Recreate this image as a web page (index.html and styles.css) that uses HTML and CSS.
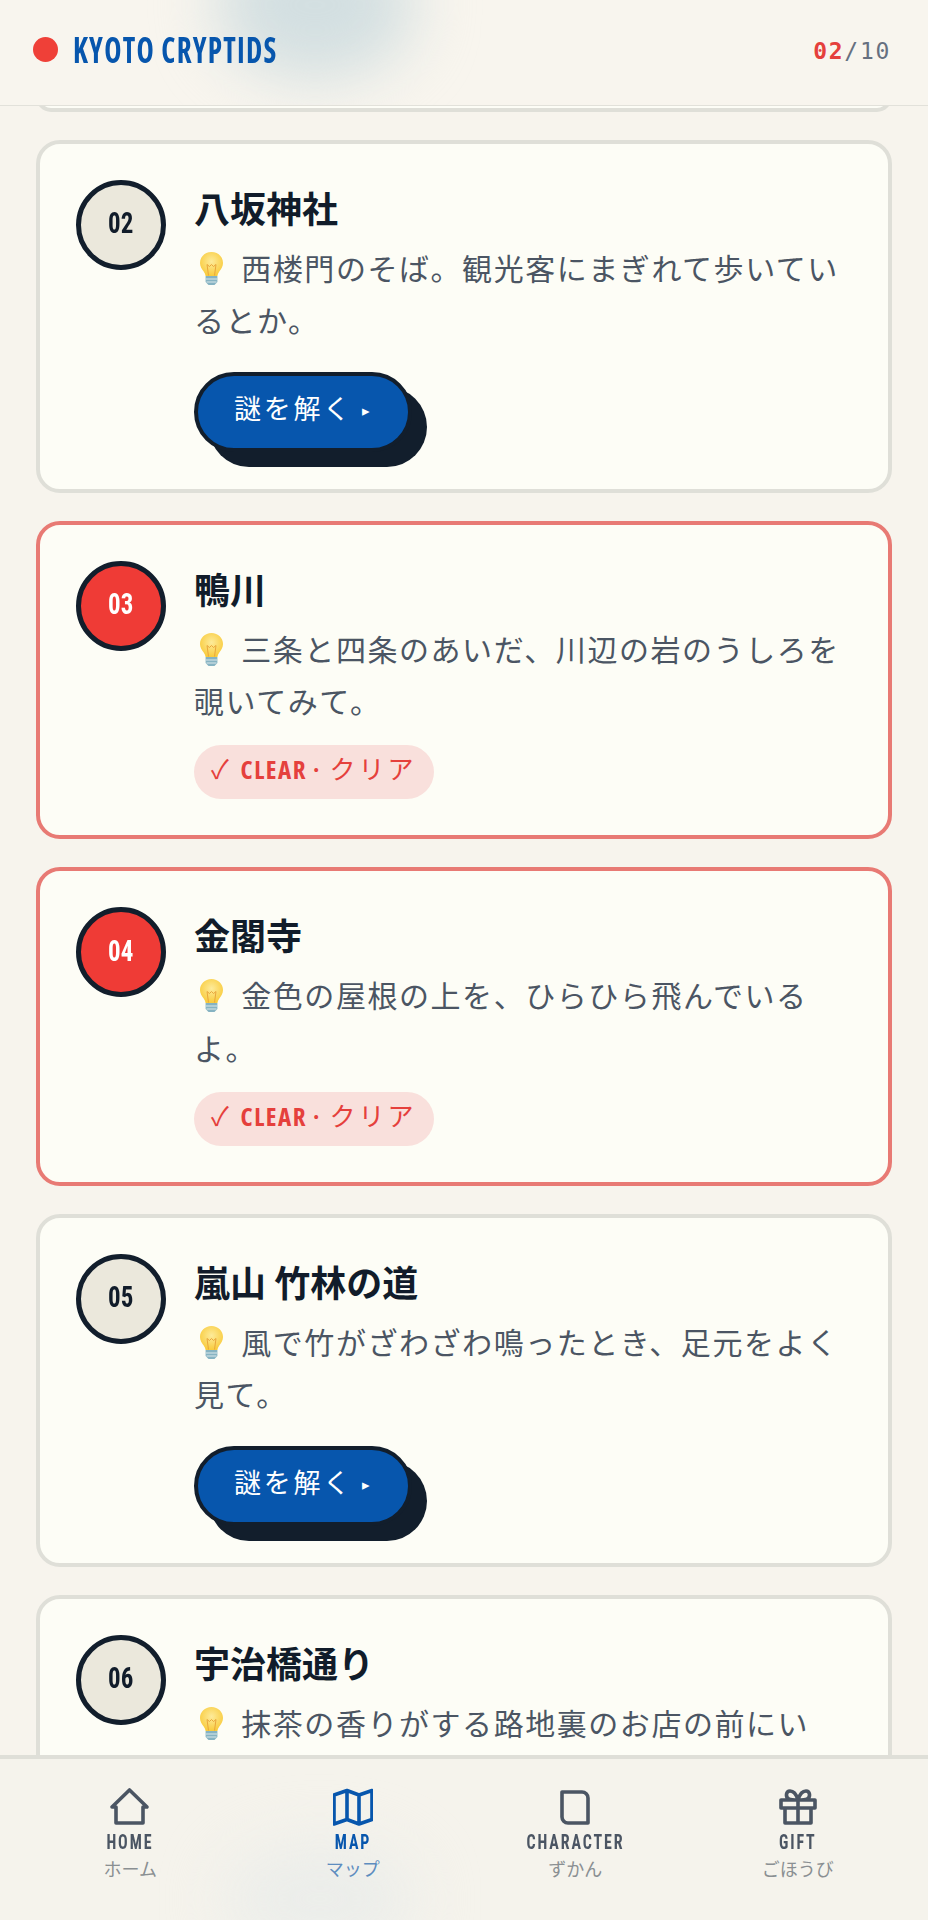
FILE: index.html
```html
<!DOCTYPE html>
<html lang="ja">
<head>
<meta charset="utf-8">
<title>Kyoto Cryptids</title>
<link rel="stylesheet" href="styles.css">
</head>
<body>
<svg class="defs" width="0" height="0" aria-hidden="true">
  <defs>
    <radialGradient id="glass" cx="50%" cy="40%" r="60%"><stop offset="0" stop-color="#fdeb9a"/><stop offset="1" stop-color="#f9cb3c"/></radialGradient>
    <symbol id="bulb" viewBox="0 0 25 35">
      <path d="M12.500 1C5.800 1 1 6 1 12c0 3.800 2 6.300 3.700 8.600 1.100 1.500 1.700 2.900 1.900 4.400h11.800c.2-1.500.8-2.900 1.900-4.400C22 18.300 24 15.800 24 12 24 6 19.200 1 12.500 1z" fill="url(#glass)"/>
      <path d="M9.500 24.500 8 13.500l2.500 2 2-2 2 2 2.500-2-1.500 11" fill="none" stroke="#e9a63b" stroke-width="1"/>
      <path d="M6.600 25h11.800v6L15.500 34h-6l-2.900-3z" fill="#86b3c2"/>
      <path d="M6.800 28h11.400M7.500 31h10" stroke="#dbe8ea" stroke-width="1"/>
    </symbol>
  </defs>
</svg>
<div class="app">
  <header class="topbar">
    <div class="glow glow-top"></div>
    <div class="brand"><span class="dot"></span><span class="brand-name">KYOTO CRYPTIDS</span></div>
    <div class="count"><b>02</b>/10</div>
  </header>
  <main class="list">
    <div class="stub"></div>
    <article class="card">
      <div class="num"><span>02</span></div>
      <div class="body">
        <h2>八坂神社</h2>
        <p><svg class="bulb"><use href="#bulb"/></svg> 西楼門のそば。観光客にまぎれて歩いているとか。</p>
        <a class="solve">謎を解く <span class="arrow">▸</span></a>
      </div>
    </article>
    <article class="card clear">
      <div class="num"><span>03</span></div>
      <div class="body">
        <h2>鴨川</h2>
        <p><svg class="bulb"><use href="#bulb"/></svg> 三条と四条のあいだ、川辺の岩のうしろを覗いてみて。</p>
        <span class="badge">✓ <span class="latin">CLEAR ·</span> クリア</span>
      </div>
    </article>
    <article class="card clear">
      <div class="num"><span>04</span></div>
      <div class="body">
        <h2>金閣寺</h2>
        <p><svg class="bulb"><use href="#bulb"/></svg> 金色の屋根の上を、ひらひら飛んでいるよ。</p>
        <span class="badge">✓ <span class="latin">CLEAR ·</span> クリア</span>
      </div>
    </article>
    <article class="card">
      <div class="num"><span>05</span></div>
      <div class="body">
        <h2>嵐山 竹林の道</h2>
        <p><svg class="bulb"><use href="#bulb"/></svg> 風で竹がざわざわ鳴ったとき、足元をよく見て。</p>
        <a class="solve">謎を解く <span class="arrow">▸</span></a>
      </div>
    </article>
    <article class="card">
      <div class="num"><span>06</span></div>
      <div class="body">
        <h2>宇治橋通り</h2>
        <p><svg class="bulb"><use href="#bulb"/></svg> 抹茶の香りがする路地裏のお店の前にいる。</p>
      </div>
    </article>
  </main>
  <nav class="tabs">
    <div class="glow glow-bottom"></div>
    <a class="tab">
      <svg viewBox="0 0 40 40"><path d="M6 20H2L19.500 3 37 20h-4v16H6z"/></svg>
      <span class="en">HOME</span><span class="ja">ホーム</span>
    </a>
    <a class="tab active">
      <svg viewBox="0 0 40 40"><path d="M1 8l13-4.500 12 4.500 13-4.500v29L26 37l-12-4.500L1 37zM14 3.500v29M26 8v29"/></svg>
      <span class="en">MAP</span><span class="ja">マップ</span>
    </a>
    <a class="tab">
      <svg viewBox="0 0 40 40"><path d="M7 5h20a6 6 0 0 1 6 6v25H13a6 6 0 0 1-6-6z"/></svg>
      <span class="en">CHARACTER</span><span class="ja">ずかん</span>
    </a>
    <a class="tab">
      <svg viewBox="0 0 40 40"><path d="M3 13h34v8H3zM7 21v15h26V21M20 13v23M20 13c-2-7-5-9-8-9-4 0-5 6-1 8 2 1 5 1 9 1zM20 13c2-7 5-9 8-9 4 0 5 6 1 8-2 1-5 1-9 1z"/></svg>
      <span class="en">GIFT</span><span class="ja">ごほうび</span>
    </a>
  </nav>
</div>
</body>
</html>
```
FILE: styles.css
```css
* { box-sizing: border-box; }
html, body { margin: 0; padding: 0; }
body { background: #f7f4ed; font-family: "Noto Sans CJK JP", "Noto Sans", sans-serif; color: #111c2a; }
.defs { position: absolute; }
.app { position: relative; width: 928px; height: 1920px; overflow: hidden; display: flex; flex-direction: column; }
.glow { position: absolute; border-radius: 50%; filter: blur(30px); }
.glow-top { left: 215px; top: -70px; width: 200px; height: 150px; background: #d3dfe1; }
.glow-bottom { left: 225px; top: 85px; width: 190px; height: 110px; background: #ebedea; }
.topbar { position: relative; z-index: 2; height: 106px; flex: none; overflow: hidden; display: flex; align-items: center; justify-content: space-between; padding: 0 37px 6px 33px; border-bottom: 1px solid #e2e1da; background: #f8f5ee; }
.brand { position: relative; display: flex; align-items: center; gap: 15px; }
.dot { width: 25px; height: 25px; border-radius: 50%; background: #ef4038; }
.brand-name { display: block; font-family: "Open Sans", sans-serif; font-stretch: 75%; font-weight: 700; font-size: 36px; letter-spacing: 1.5px; color: #0756ad; white-space: nowrap; transform: scaleX(.81); transform-origin: left center; }
.count { position: relative; margin-top: 2px; font-family: "DejaVu Sans Mono", "Liberation Mono", monospace; font-size: 23px; letter-spacing: 1.7px; color: #667080; }
.count b { color: #e5403c; }
.list { flex: 1; min-height: 0; overflow: hidden; padding: 0 36px; display: flex; flex-direction: column; gap: 28px; }
.stub { flex: none; height: 30px; margin-top: -24.5px; border: 4px solid #dfdfd8; border-radius: 24px; background: #fdfdf6; }
.card { flex: none; display: flex; gap: 28px; padding: 36px; background: #fdfdf6; border: 4px solid #dfdfd8; border-radius: 24px; }
.card.clear { border-color: #e87a74; }
.num { flex: none; width: 90px; height: 90px; padding-bottom: 3px; border-radius: 50%; border: 5px solid #121e2c; background: #ebe8dc; display: flex; align-items: center; justify-content: center; font-family: "Roboto", sans-serif; font-stretch: 75%; font-weight: 700; font-size: 29px; }
.num span { display: block; transform: scaleX(.86); }
.clear .num { background: #ef3b36; color: #fff; }
.body { flex: 1; min-width: 0; }
h2 { margin: 0; font-size: 36px; line-height: 54px; font-weight: 700; }
p { margin: 7px 0 0; font-size: 30px; line-height: 52.5px; letter-spacing: 1.55px; color: #4b5563; }
.bulb { width: 25px; height: 35px; margin: 0 9px 0 5px; vertical-align: -6px; }
.solve { display: block; width: fit-content; margin: 26px 0 1px; padding: 0 36px; height: 80px; line-height: 64px; border: 4px solid #121e2c; border-radius: 40px; background: #0756ad; color: #fff; font-size: 27px; letter-spacing: 2.7px; box-shadow: 15px 15px 0 #121e2c; white-space: nowrap; }
.arrow { font-size: 15px; vertical-align: 3px; }
.badge { display: block; width: fit-content; margin-top: 18.5px; height: 54px; line-height: 46px; padding: 0 17px 0 17px; border-radius: 27px; background: #f9e0dc; color: #e5403c; font-size: 26px; letter-spacing: 3px; white-space: nowrap; }
.latin { font-family: "Open Sans", sans-serif; font-stretch: 75%; font-weight: 700; font-size: 25px; letter-spacing: 1.5px; }
.tabs { position: relative; z-index: 2; flex: none; height: 165px; overflow: hidden; display: grid; grid-template-columns: repeat(4, 1fr); border-top: 4px solid #dfdfd8; background: #f5f3ec; padding: 28px 19px 0; }
.tab { position: relative; display: flex; flex-direction: column; align-items: center; color: #4b5563; }
.tab svg { width: 40px; height: 40px; flex: none; fill: none; stroke: currentColor; stroke-width: 3.6; stroke-linejoin: round; }
.tab .en { margin-top: 5px; font-family: "Roboto", sans-serif; font-stretch: 75%; font-weight: 700; font-size: 21px; line-height: 20px; letter-spacing: 2.5px; white-space: nowrap; transform: scaleX(.76); }
.tab .ja { margin-top: 3px; font-size: 18px; line-height: 26px; color: #8a8f92; }
.tab.active { color: #0756ad; }
.tab.active .ja { color: #5d8cbf; }
```
